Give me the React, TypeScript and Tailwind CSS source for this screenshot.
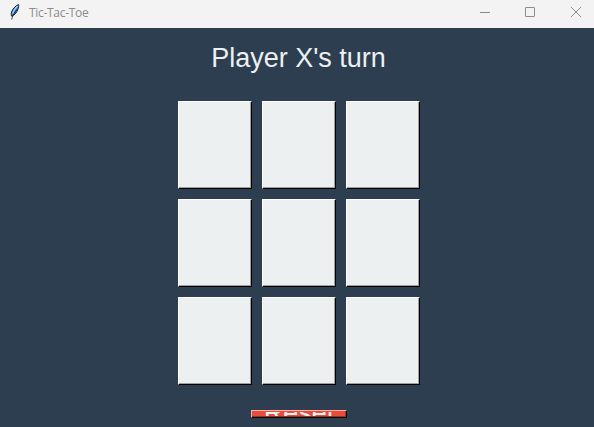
function Feather() {
  return (
    <svg width="12" height="16" viewBox="0 0 12 16" className="block">
      <path d="M9.6 0.6C6.8 1.6 3.8 4.6 2.6 7.8C2 9.8 2.1 11.2 2.6 12.2C5 11.4 7.8 8.8 8.8 5.6C9.5 3.6 9.9 1.8 9.6 0.6Z" fill="#3f86dc" stroke="#17202c" strokeWidth="1" />
      <path d="M8.6 2C6.4 4 4.4 7 3.6 9.8" stroke="#a9d2fb" strokeWidth="1.3" fill="none" />
      <path d="M8.4 5C6.5 7.5 4 10 2.7 15.5" stroke="#10151c" strokeWidth="0.8" fill="none" />
    </svg>
  );
}

function TitleBar() {
  return (
    <header className="flex h-7 shrink-0 items-start bg-[#f3f3f3] text-[#8c8c8c]">
      <div className="pt-1 pl-[9px]">
        <Feather />
      </div>
      <h1 className="pt-[5px] pl-2 font-['Open_Sans','Noto_Sans',sans-serif] text-[12px] leading-4 tracking-[-0.3px]">Tic-Tac-Toe</h1>
      <div className="ml-auto flex pt-[7px] pr-[13px]">
        <svg width="10" height="10" viewBox="0 0 10 10" fill="none" stroke="currentColor" className="mr-[35px]">
          <path d="M0 5.5H10" />
        </svg>
        <svg width="10" height="10" viewBox="0 0 10 10" fill="none" stroke="currentColor" className="mr-9">
          <rect x="0.5" y="0.5" width="9" height="9" rx="0.5" />
        </svg>
        <svg width="10" height="10" viewBox="0 0 10 10" fill="none" stroke="currentColor">
          <path d="M0 0L10 10M10 0L0 10" />
        </svg>
      </div>
    </header>
  );
}

const cells = Array.from({ length: 9 }, (_, i) => i);

export default function App() {
  return (
    <div className="flex h-[427px] w-[594px] flex-col overflow-hidden bg-[#2c3e50] font-['Liberation_Sans',Arial,sans-serif]">
      <TitleBar />
      <main className="flex flex-1 flex-col items-center">
        <p className="mt-[14px] ml-[3px] text-[27px] leading-8 text-[#ecf0f1]">Player X's turn</p>
        <div className="mt-[27px] ml-1 grid grid-cols-[repeat(3,74px)] gap-[10px]">
          {cells.map((i) => (
            <button
              key={i}
              aria-label={`Cell ${i + 1}`}
              className="h-[88px] border border-t-white border-r-black border-b-black border-l-white bg-[#ecf0f1] shadow-[inset_-1px_-1px_0_#a0a0a0]"
            />
          ))}
        </div>
        <button className="mt-[25px] ml-1 flex h-2 w-24 items-center justify-center border border-t-[#ffb0a4] border-r-black border-b-black border-l-[#ffb0a4] bg-[#e74c3c] text-[27px] leading-8 text-[#ecf0f1] shadow-[inset_-1px_-1px_0_#9c3328]">
          <span className="flex h-1 items-center overflow-hidden">
            <span className="-mt-0.5">Reset</span>
          </span>
        </button>
      </main>
    </div>
  );
}
